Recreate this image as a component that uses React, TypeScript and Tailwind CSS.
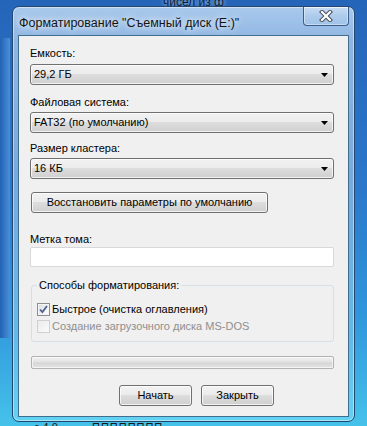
import React from "react";

function Combo({ value }: { value: string }) {
  return (
    <div className="flex items-center justify-between w-[304px] h-[21px] pl-[3px] pr-[5px] rounded-[3px] border border-[#707070] bg-[linear-gradient(180deg,#f2f2f2_0%,#ebebeb_49%,#dddddd_50%,#cfcfcf_100%)] shadow-[inset_0_0_0_1px_rgba(255,255,255,0.7)]">
      <span className="leading-[15px]">{value}</span>
      <svg width="7" height="4" viewBox="0 0 7 4">
        <path d="M0 0h7L3.5 4z" fill="#000" />
      </svg>
    </div>
  );
}

function Button({ children, className }: { children: React.ReactNode; className?: string }) {
  return (
    <button
      type="button"
      className={`flex items-center justify-center h-[21px] rounded-[3px] border border-[#707070] bg-[linear-gradient(180deg,#f2f2f2_0%,#ebebeb_49%,#dddddd_50%,#cfcfcf_100%)] shadow-[inset_0_0_0_1px_rgba(255,255,255,0.75)] text-black leading-[15px] ${className ?? ""}`}
    >
      {children}
    </button>
  );
}

export default function App() {
  return (
    <div className="relative w-[367px] h-[426px] overflow-hidden bg-[linear-gradient(180deg,#2565b9_0%,#2b78cb_45%,#3098dc_75%,#45c2ea_100%)] font-['Liberation_Sans',Arial,sans-serif] text-[11px] text-black">
      {/* desktop fragments behind the dialog */}
      <div className="absolute left-0 top-[38px] w-[10px] h-[300px] bg-[linear-gradient(90deg,#2262b4,#4a90d8)]" />
      <div className="absolute left-[163px] top-[-7px] text-[12px] text-[#0d1f36] [text-shadow:0_0_4px_rgba(255,255,255,0.8)]">
        чисел из ф
      </div>
      <div className="absolute left-[34px] top-[419px] text-[11px] text-[#1a1a1a]">с.4.0</div>
      <div className="absolute left-[92px] top-[419px] text-[11px] text-[#1a1a1a] tracking-[1px]">ПППППППП</div>

      <div className="pt-[6px] pl-[12px]">
        <div className="relative flex flex-col w-[343px] h-[416px] rounded-[7px] border border-[#24466f] bg-[linear-gradient(180deg,#a9c9ec_0%,#8fb6e2_8%,#79a9dc_40%,#63b9e8_80%,#62d2f3_100%)] shadow-[inset_0_0_0_1px_rgba(255,255,255,0.45)]">
          {/* title bar */}
          <div className="flex justify-between h-[28px]">
            <div className="pl-[6px] pt-[8px] leading-[16px] text-[12.5px] text-[#141414] [text-shadow:0_0_6px_rgba(255,255,255,0.95),0_0_10px_rgba(255,255,255,0.7)]">
              Форматирование "Съемный диск (E:)"
            </div>
            <div className="flex items-center justify-center w-[46px] h-[19px] mr-[5px] rounded-b-[4px] border border-t-0 border-[#3b5f8c] bg-[linear-gradient(180deg,rgba(255,255,255,0.35),rgba(255,255,255,0.12)_50%,rgba(180,210,240,0.2))] shadow-[inset_0_0_0_1px_rgba(255,255,255,0.4)]">
              <svg width="14" height="12" viewBox="0 0 14 12">
                <path d="M3 2l8 8M11 2l-8 8" stroke="#4a4f58" strokeWidth="4.2" strokeLinecap="square" />
                <path d="M3 2l8 8M11 2l-8 8" stroke="#ffffff" strokeWidth="2.2" strokeLinecap="square" />
              </svg>
            </div>
          </div>

          {/* client area */}
          <div className="flex-1 mx-[5px] mb-[4px] border border-[#3f6e8e] bg-[#f0f0f0] pl-[11px]">
            <div className="mt-[10px] leading-[15px]">Емкость:</div>
            <div className="mt-[3px]">
              <Combo value="29,2 ГБ" />
            </div>

            <div className="mt-[10px] leading-[15px]">Файловая система:</div>
            <div className="mt-[2px]">
              <Combo value="FAT32 (по умолчанию)" />
            </div>

            <div className="mt-[8px] leading-[15px]">Размер кластера:</div>
            <div className="mt-[2px]">
              <Combo value="16 КБ" />
            </div>

            <Button className="mt-[13px] ml-[1px] w-[237px] h-[20px]">
              Восстановить параметры по умолчанию
            </Button>

            <div className="mt-[19px] leading-[15px]">Метка тома:</div>
            <div className="w-[304px] h-[20px] rounded-[2px] border border-[#d6d8dc] bg-white" />

            <fieldset className="mt-[11px] ml-[1px] w-[303px] rounded-[3px] border border-[#d5dfe5] pl-[5px] pb-[7px]">
              <legend className="px-[2px] leading-[15px]">Способы форматирования:</legend>
              <div className="mt-[8px] flex items-center gap-[2px] h-[16px]">
                <div className="flex items-center justify-center w-[13px] h-[13px] border border-[#8e8f8f] bg-[linear-gradient(135deg,#dcdcdc,#ffffff)] shadow-[inset_0_0_0_1px_#f4f4f4]">
                  <svg width="9" height="9" viewBox="0 0 9 9">
                    <path d="M1 4.5l2.4 2.6L8 1" fill="none" stroke="#4c6094" strokeWidth="1.8" />
                  </svg>
                </div>
                <span className="leading-[15px]">Быстрое (очистка оглавления)</span>
              </div>
              <div className="mt-[1px] flex items-center gap-[2px] h-[16px]">
                <div className="w-[13px] h-[13px] border border-[#d0d0d0] bg-[linear-gradient(135deg,#ececec,#fafafa)]" />
                <span className="leading-[15px] text-[#8f8f8f]">Создание загрузочного диска MS-DOS</span>
              </div>
            </fieldset>

            <div className="mt-[14px] ml-[1px] w-[303px] h-[13px] rounded-[2px] border border-[#b2b2b2] bg-[linear-gradient(180deg,#f3f3f3_0%,#e2e2e2_45%,#d6d6d6_55%,#e4e4e4_100%)] shadow-[inset_0_0_0_1px_rgba(255,255,255,0.6)]" />

            <div className="mt-[16px] ml-[89px] flex gap-[9px]">
              <Button className="w-[73px]">Начать</Button>
              <Button className="w-[73px]">Закрыть</Button>
            </div>
          </div>
        </div>
      </div>
    </div>
  );
}
